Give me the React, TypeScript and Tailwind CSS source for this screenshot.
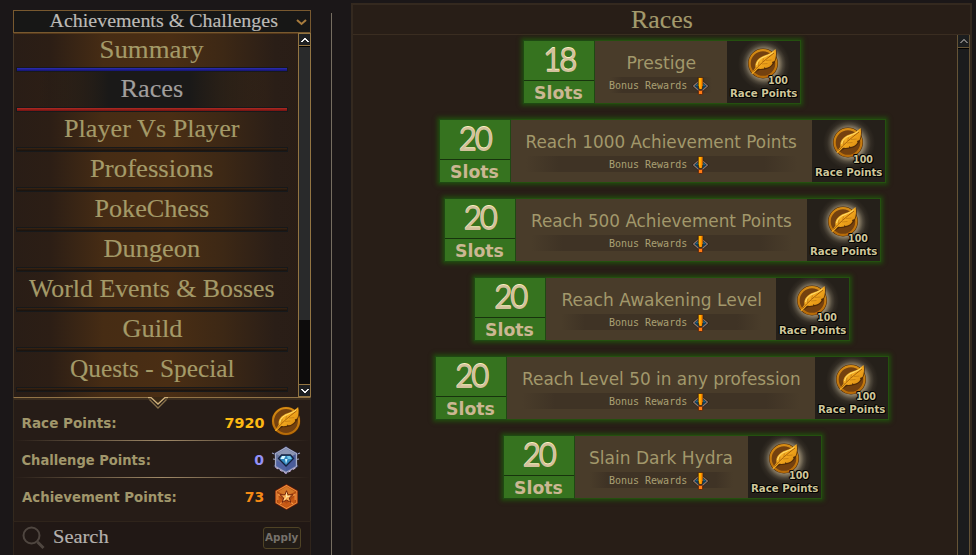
import { useLayoutEffect, useRef, useState } from 'react';

const SERIF = "font-['Liberation_Serif',serif] [-webkit-text-stroke:0.150px_currentColor]";
const SANS = "font-['DejaVu_Sans',sans-serif]";

/* One line of text stretched horizontally to a given width. */
function Fit({ text, width, className = '' }: { text: string; width: number; className?: string }) {
  const ref = useRef<HTMLSpanElement>(null);
  const [scale, setScale] = useState(1);
  useLayoutEffect(() => {
    if (ref.current) setScale(width / ref.current.offsetWidth);
  }, [width, text]);
  return (
    <span className="flex justify-center" style={{ width }}>
      <span ref={ref} className={`block shrink-0 whitespace-nowrap ${className}`} style={{ transform: `scaleX(${scale})` }}>
        {text}
      </span>
    </span>
  );
}

function LeafCoin({ className }: { className: string }) {
  return (
    <svg viewBox="0 0 32 32" className={className}>
      <defs>
        <linearGradient id="leaf" x1="0" y1="0" x2="1" y2="1">
          <stop offset="0" stopColor="#ffd147" />
          <stop offset="0.5" stopColor="#f2a71d" />
          <stop offset="1" stopColor="#cf7f0b" />
        </linearGradient>
        <linearGradient id="rim" x1="0" y1="0" x2="0" y2="1">
          <stop offset="0" stopColor="#d68c14" />
          <stop offset="1" stopColor="#b86c08" />
        </linearGradient>
      </defs>
      <circle cx="15.500" cy="16.500" r="15" fill="#4a2604" />
      <circle cx="15.500" cy="16.500" r="13.400" fill="#74410f" stroke="url(#rim)" strokeWidth="2.200" />
      <path d="M5 27l4-6c-1-5 2-9 8-12 5-2 8-3 12-6 1 5 0 9-2 13-3 5-8 7-15 7z" fill="#4a2604" opacity=".8" />
      <path d="M4 26.500L8 20.500C7 15 11 10.500 17 8.500c5-1.800 8-3.500 11-6.500 1 4.500.5 8.500-1 12l-2.500 1 .5 1.500c-2 3-4 4-7 4.500l-1-1-.5 1.500c-2 .5-4 .5-6 .3L5.500 27z" fill="url(#leaf)" />
      <path d="M6 24.500C11 18.500 18 12.500 26.500 6" fill="none" stroke="#a65f08" strokeWidth="1" />
      <path d="M11 19l.5-4.500M15 15.500l1-4M14.500 17l5.500-.5M18.500 13.500l5.500-.5" fill="none" stroke="#c17b12" strokeWidth=".8" />
      <path d="M9 18C10 13.500 13 11 17.500 9.500 21 8 24 7 26 5" fill="none" stroke="#ffe072" strokeWidth="1" />
    </svg>
  );
}

function ChallengeIcon() {
  return (
    <svg viewBox="0 0 30 30" className="h-[30px] w-[30px]">
      <path d="M1 8l5 2M29 8l-5 2M2 14l3 .5M28 14l-3 .5M3 21.500l3-2.500M27 21.500l-3-2.500" stroke="#9ba1c2" strokeWidth="1.100" />
      <path d="M15 .8l3.500 3L27 8l-1.500 7L27 22l-8 4-4 3.500L11 26l-8-4 1.500-7L3 8l8.500-4.200z" fill="#2b2d52" />
      <path d="M15 2.500L25.500 8.500v13L15 27.500 4.500 21.500v-13z" fill="#66749f" stroke="#a5abc6" strokeWidth="1.200" />
      <path d="M15 3.500L24.500 9 15 14 5.500 9z" fill="#a1a9bf" opacity=".65" />
      <path d="M15 26.500l9.500-5.500V9.500L15 15z" fill="#3f529a" opacity=".7" />
      <path d="M5.500 15.500L15 20v6.500L5.500 21z" fill="#4c5fa3" opacity=".8" />
      <path d="M10.500 10h9l3 3.500L15 21l-7.500-7.500z" fill="#2f86bd" stroke="#15213f" strokeWidth="1.300" />
      <path d="M11 11h3.500L13 14H9.500zM16.500 14L15 19l-1-5z" fill="#d3f6ff" />
      <path d="M16 11h3l1.800 3h-4z" fill="#6fc4e8" />
      <path d="M4.500 22.500L15 28.500l10.500-6" fill="none" stroke="#d0b4dc" strokeWidth="1" strokeDasharray="3 2" />
    </svg>
  );
}

function AchievementIcon() {
  return (
    <svg viewBox="0 0 26 28" className="h-[28px] w-[25px]">
      <path d="M13 .5L25 7.300v13.400L13 27.500 1 20.700V7.300z" fill="#6f1f0a" />
      <path d="M13 2L23.700 8.100v11.800L13 26 2.300 19.900V8.100z" fill="#b04c12" stroke="#ee8d3a" strokeWidth="1.100" />
      <path d="M13 3l9 5.500L13 13 4 8.500z" fill="#df8630" opacity=".75" />
      <path d="M4 13l9 8 9-8v6.500L13 25l-9-5.500z" fill="#cd5d16" opacity=".8" />
      <path d="M4 17v-6l3 2M22 17v-6l-3 2M6 21l4-2M20 21l-4-2" fill="none" stroke="#f59542" strokeWidth="1.100" />
      <path d="M13 7.500l1.600 4.200 5 .1-3.700 3.200 1.600 4.700-4.500-2.500-4.500 2.500L10.100 15l-3.700-3.200 5-.1z" fill="#f6ad55" stroke="#6f210b" strokeWidth="1" />
      <path d="M13 9.500v4.500l-2.500 3M13 14l3.500-1.200" fill="none" stroke="#fff0b0" strokeWidth=".9" />
    </svg>
  );
}

function BonusIcon() {
  return (
    <svg viewBox="0 0 17 18" className="h-[18px] w-[17px]">
      <path d="M8.500 1.500L17 9l-8.500 7.500L0 9z" fill="#1a1410" />
      <path d="M8.500 2.800L15.500 9l-7 6.200L1.500 9z" fill="#0d3d59" stroke="#94766a" strokeWidth="1.100" />
      <path d="M3.500 9l3-3v3zM10.500 6l3 3h-3z" fill="#246a8a" />
      <path d="M6.200.4h4.600v8.200L9.800 12.600H7.200L6.200 8.600z" fill="#ffb400" stroke="#3d1b0a" strokeWidth=".8" />
      <path d="M9 1h1.300v7.400L9.400 12H8.600z" fill="#ff8400" />
      <rect x="6.400" y="13.300" width="4.200" height="4.200" rx=".8" fill="#ff7a14" stroke="#4c1e0a" strokeWidth=".8" />
    </svg>
  );
}

function Chevron({ up = false, color = '#f2f2f2' }: { up?: boolean; color?: string }) {
  return (
    <svg viewBox="0 0 8 6" className="h-[6px] w-[8px]" shapeRendering="crispEdges">
      <path d={up ? 'M.5 5L4 1.500 7.500 5' : 'M.5 1L4 4.500 7.500 1'} fill="none" stroke={color} strokeWidth="1.700" />
    </svg>
  );
}

type Tone = 'blue' | 'red' | 'dark';
const MENU: { label: string; width: number; line: Tone; active?: boolean }[] = [
  { label: 'Summary', width: 104, line: 'blue' },
  { label: 'Races', width: 63, line: 'red', active: true },
  { label: 'Player Vs Player', width: 176, line: 'dark' },
  { label: 'Professions', width: 123, line: 'dark' },
  { label: 'PokeChess', width: 115, line: 'dark' },
  { label: 'Dungeon', width: 97, line: 'dark' },
  { label: 'World Events & Bosses', width: 246, line: 'dark' },
  { label: 'Guild', width: 60, line: 'dark' },
  { label: 'Quests - Special', width: 164, line: 'dark' },
];

const LINE: Record<Tone, string> = {
  blue: 'from-[#2c2cb4] to-[#15156e]',
  red: 'from-[#b12a22] to-[#711311]',
  dark: 'from-[#3c240f] to-[#16110e]',
};

const CARDS = [
  { n: '18', title: 'Prestige', text: 70, mid: 'w-[132px]' },
  { n: '20', title: 'Reach 1000 Achievement Points', text: 271, mid: 'w-[301px]' },
  { n: '20', title: 'Reach 500 Achievement Points', text: 261, mid: 'w-[291px]' },
  { n: '20', title: 'Reach Awakening Level', text: 201, mid: 'w-[230px]' },
  { n: '20', title: 'Reach Level 50 in any profession', text: 279, mid: 'w-[308px]' },
  { n: '20', title: 'Slain Dark Hydra', text: 144, mid: 'w-[173px]' },
];

function Sidebar() {
  return (
    <aside className="mt-[10px] ml-[13px] flex w-[298px] shrink-0 flex-col">
      <div className="flex h-[23px] items-center border border-[#78592f] bg-[#171716]">
        <div className="ml-[36px] pb-[2px]">
          <Fit text="Achievements & Challenges" width={228} className={`${SERIF} text-[19px] leading-[21px] text-[#bdbbb7]`} />
        </div>
        <svg viewBox="0 0 11 7" className="ml-[18px] mt-[2px] h-[7px] w-[11px]">
          <path d="M1 1l4.500 4L10 1" fill="none" stroke="#a87c3d" strokeWidth="2" />
        </svg>
      </div>

      <div className="flex h-[364px] border-l border-[#443626] bg-[linear-gradient(90deg,#291d16_0%,#2c1e15_12%,#462c14_30%,#4a2e14_52%,#3d2815_70%,#2a1e17_88%,#291d16_100%)]">
        <div className="flex w-[284px] flex-col border-t border-[#55381a] pl-[2px]">
          {MENU.map((m, i) => (
            <div key={m.label} className="w-[272px]">
              <div
                className={`flex items-center justify-center pb-[2px] ${i === 0 ? 'h-[33px]' : 'h-[35px]'} ${
                  m.active ? 'bg-[linear-gradient(90deg,transparent_8%,#1a1918_34%,#1a1918_64%,transparent_92%)]' : ''
                }`}
              >
                <Fit
                  text={m.label}
                  width={m.width}
                  className={`${SERIF} text-[25px] leading-[34px] ${m.active ? 'text-[#a19f9d]' : 'text-[#a49a68]'}`}
                />
              </div>
              <div className={`h-[5px] border border-[#17191b] bg-linear-to-b ${LINE[m.line]}`} />
            </div>
          ))}
        </div>
        <div className="flex w-[13px] flex-col border-x border-[#937542]">
          <div className="flex h-[13px] items-center justify-center border-y border-[#937542] bg-[#1e2022]">
            <Chevron up />
          </div>
          <div className="h-[274px] border-t border-black bg-[#292a2b]" />
          <div className="h-[64px] bg-[#0d0c0c]" />
          <div className="flex h-[13px] items-center justify-center border-y border-[#937542] bg-[#1e2022]">
            <Chevron />
          </div>
        </div>
      </div>

      <div className="relative flex h-[124px] flex-col border-x border-t border-x-[#33291e] border-t-[#927447] bg-[#261c17]">
        <svg viewBox="0 0 20 12" className="absolute left-[134px] -top-[1px] h-[12px] w-[20px]">
          <path d="M2 0h16l-8 8z" fill="#3a2814" />
          <path d="M0 .5h3L10 7l7-6.500h3" fill="none" stroke="#d0b27c" strokeWidth="1.300" />
          <path d="M1.500 2.500L10 11l8.500-8.500" fill="none" stroke="#87704a" strokeWidth="1.300" />
        </svg>
        <div className="h-[2px] bg-[#3a2c1e]" />
        <PointsRow label="Race Points:" width={95} value="7920" valueWidth={40} color="text-[#fdb913]" height="h-[40px] pt-[5px]">
          <LeafCoin className="-mt-[4px] h-[31px] w-[31px]" />
        </PointsRow>
        <Divider />
        <PointsRow label="Challenge Points:" width={129} value="0" valueWidth={10} color="text-[#9491f7]" height="h-[36px] pt-[2px]">
          <ChallengeIcon />
        </PointsRow>
        <Divider />
        <PointsRow label="Achievement Points:" width={155} value="73" valueWidth={19} color="text-[#f58a16]" height="h-[37px]">
          <AchievementIcon />
        </PointsRow>
      </div>

      <div className="flex h-[34px] items-center border-x border-t border-[#2f241b] bg-[#211815] pb-[2px]">
        <svg viewBox="0 0 24 24" className="ml-[8px] h-[24px] w-[24px]">
          <circle cx="9.500" cy="9.500" r="8" fill="none" stroke="#4f4640" strokeWidth="2" />
          <path d="M15.500 16L21.500 22" stroke="#4f4640" strokeWidth="3" />
        </svg>
        <div className="ml-[7px] pb-px">
          <Fit text="Search" width={56} className={`${SERIF} text-[19px] leading-[24px] text-[#b5b2af]`} />
        </div>
        <div className="ml-[154px] flex h-[22px] w-[38px] items-center justify-center rounded-[3px] border border-[#4f4325] bg-[#221c17]">
          <Fit text="Apply" width={33} className={`${SANS} text-[11px] leading-[18px] font-bold text-[#76716b]`} />
        </div>
      </div>
    </aside>
  );
}

function Divider() {
  return <div className="h-px shrink-0 bg-linear-to-r from-transparent via-[#a18a68] to-transparent" />;
}

function PointsRow(props: {
  label: string;
  width: number;
  value: string;
  valueWidth: number;
  color: string;
  height: string;
  children: React.ReactNode;
}) {
  return (
    <div className={`flex shrink-0 items-center pl-[8px] ${props.height}`}>
      <Fit text={props.label} width={props.width} className={`${SANS} text-[14px] leading-[18px] font-bold text-[#a1976b]`} />
      <div className="ml-auto">
        <Fit text={props.value} width={props.valueWidth} className={`${SANS} text-[14px] leading-[18px] font-bold ${props.color}`} />
      </div>
      <div className="flex w-[46px] shrink-0 justify-center pr-[2px]">{props.children}</div>
    </div>
  );
}

function RaceCard({ n, title, text, mid }: (typeof CARDS)[number]) {
  return (
    <div className="flex h-[64px] shrink-0 shadow-[0_0_4px_2px_#22480f]">
      <div className="flex w-[72px] flex-col border border-[#1f4913] bg-[#36731f]">
        <div className="flex h-[40px] items-center justify-center border-b border-[#17330d] pb-px font-['Lato',sans-serif] text-[32px] leading-[38px] tracking-[-2.500px] text-[#d3c19c] [text-shadow:0_-1px_0_#fbf0c0]">
          {n}
        </div>
        <div className="flex flex-1 items-center justify-center pt-px pr-px">
          <Fit text="Slots" width={49} className={`${SANS} text-[18px] leading-[22px] font-bold text-[#cbb792]`} />
        </div>
      </div>
      <div className={`flex flex-col items-center border-y border-t-[#24500f] border-b-[#24500f] bg-[#493c2a] pt-[10px] ${mid}`}>
        <div className="pl-px">
          <Fit text={title} width={text} className={`${SANS} text-[18px] leading-[24px] text-[#a2986b]`} />
        </div>
        <div className="mt-[2px] flex h-[16px] w-[calc(100%-30px)] items-center justify-center bg-[linear-gradient(90deg,transparent,#3f3325_12%,#3f3325_88%,transparent)] pr-[4px]">
          <div className="pb-px">
            <Fit text="Bonus Rewards" width={78} className="font-['DejaVu_Sans_Mono',monospace] text-[10.500px] leading-[14px] text-[#aaa073]" />
          </div>
          <div className="mt-[2px] ml-[4px] shrink-0">
            <BonusIcon />
          </div>
        </div>
      </div>
      <div className="relative flex w-[74px] flex-col items-center border-y border-r border-[#24500f] bg-[#25201a] bg-[radial-gradient(circle_at_37px_23px,#a3967c_0,#8d8068_15px,#4c4539_19px,#312b23_22px,transparent_26px)]">
        <LeafCoin className="mt-[6px] h-[32px] w-[33px]" />
        <div className="absolute top-[33px] left-[41px]">
          <Fit text="100" width={20} className={`${SANS} ${OUTLINE}`} />
        </div>
        <div className="mt-[8px] pl-px">
          <Fit text="Race Points" width={67} className={`${SANS} ${OUTLINE}`} />
        </div>
      </div>
    </div>
  );
}

const OUTLINE =
  'text-[10.500px] leading-[13px] font-bold text-[#cfc69a] [text-shadow:1px_0_0_#000,-1px_0_0_#000,0_1px_0_#000,0_-1px_0_#000,1px_1px_0_#000,-1px_-1px_0_#000]';

export default function App() {
  return (
    <div className="flex h-[555px] w-[976px] overflow-hidden bg-[#1b1718]">
      <Sidebar />
      <div className="mt-[13px] ml-[20px] w-px shrink-0 bg-[#766e61]" />
      <main className="mt-[3px] ml-[19px] flex w-[621px] shrink-0 flex-col border-x-2 border-t-2 border-[#34291f] bg-[#281e17]">
        <header className="flex h-[30px] shrink-0 items-center justify-center border-b border-[#3a2d21]">
          <Fit text="Races" width={62} className={`${SERIF} text-[25px] leading-[30px] text-[#a39a6c]`} />
        </header>
        <div className="flex min-h-0 flex-1">
          <div className="ml-[14px] flex flex-1 flex-col items-center gap-[15px] pt-[5px]">
            {CARDS.map((c) => (
              <RaceCard key={c.title} {...c} />
            ))}
          </div>
          <div className="flex w-[13px] shrink-0 flex-col border-x border-[#655436]">
            <div className="flex h-[13px] items-center justify-center border-b border-[#655436] bg-[#1c1e1f]">
              <Chevron up color="#777675" />
            </div>
            <div className="flex-1 border-t border-black bg-[#1b1c1d]" />
          </div>
        </div>
      </main>
    </div>
  );
}
